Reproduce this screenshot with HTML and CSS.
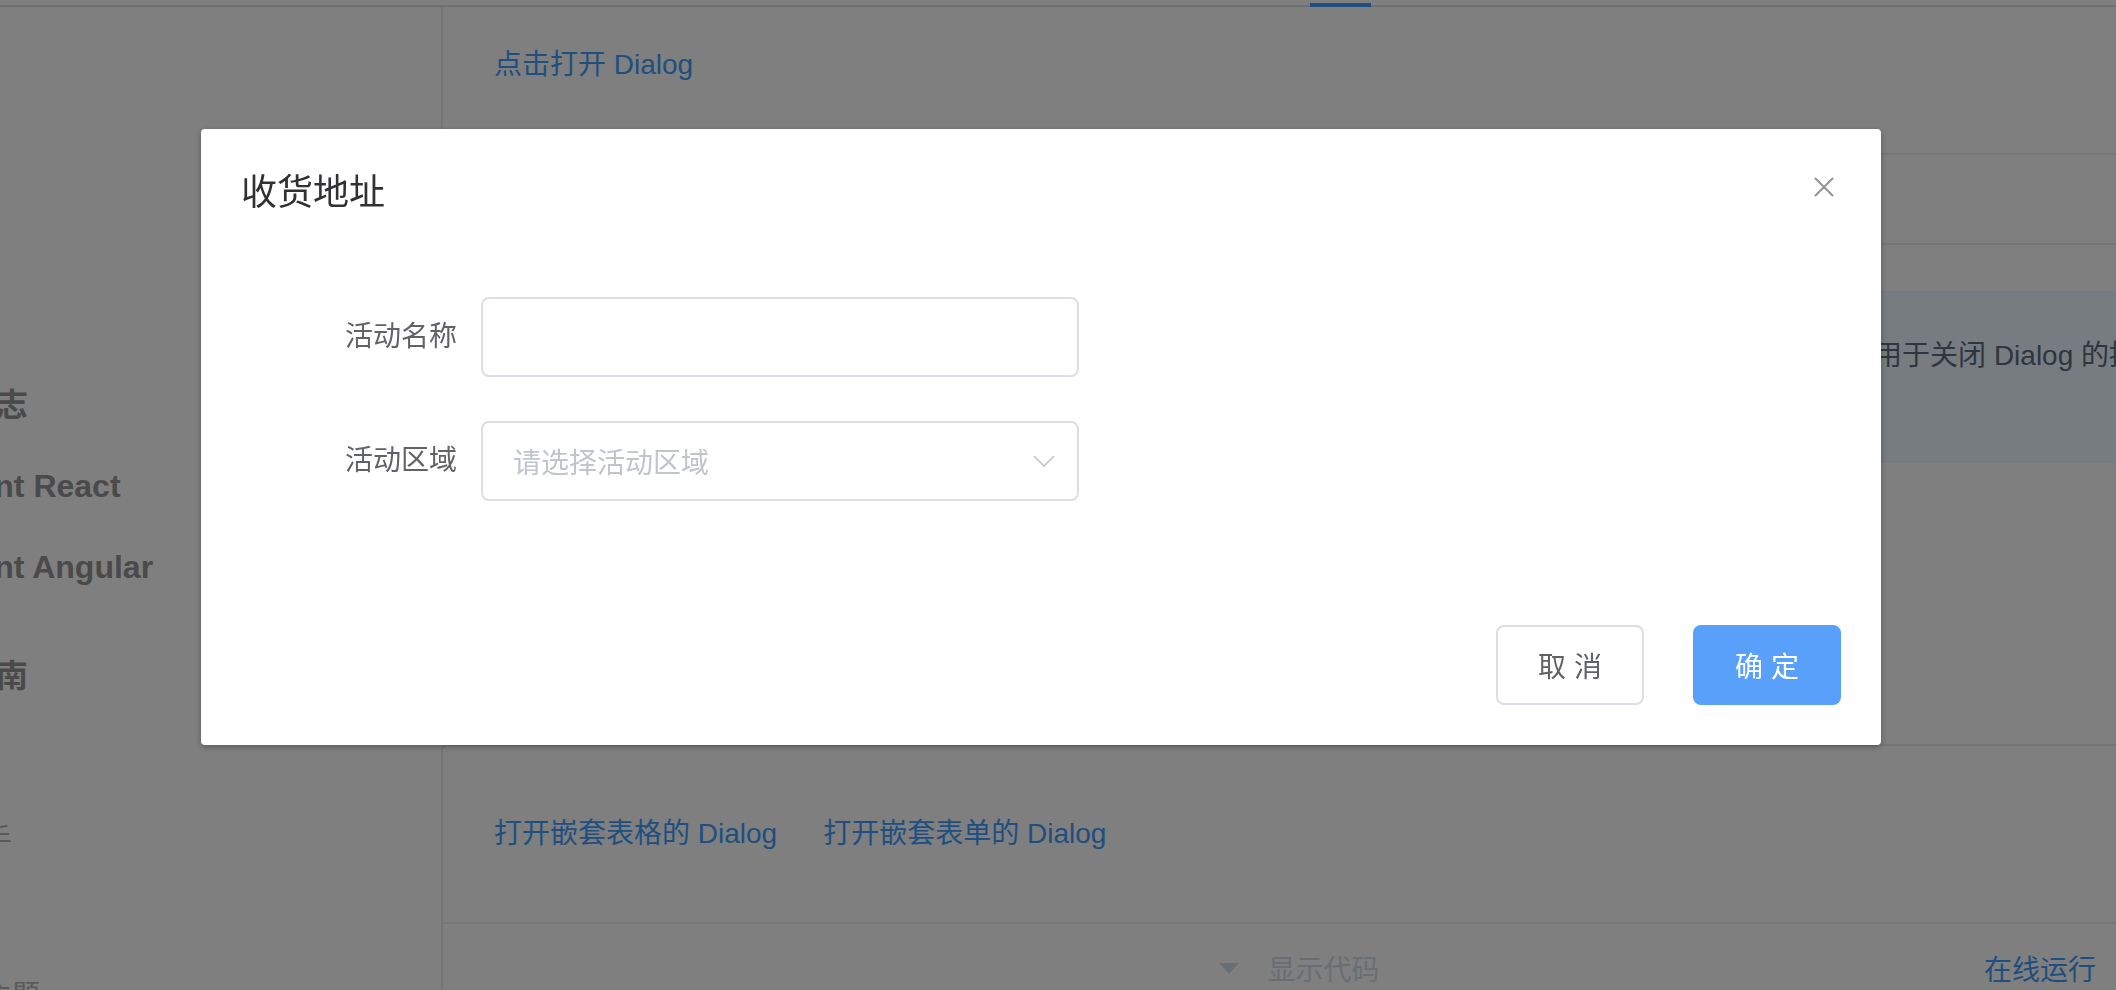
FILE: index.html
```html
<!DOCTYPE html>
<html lang="zh-CN">
<head>
<meta charset="utf-8">
<title>Dialog 对话框</title>
<link rel="stylesheet" href="styles.css">
</head>
<body>
<div class="page">
  <header class="header">
    <span class="nav-active"></span>
  </header>
  <div class="layout">
    <aside class="sidebar">
      <ul class="nav">
        <li class="nav-item">更新日志</li>
        <li class="nav-item">Element React</li>
        <li class="nav-item">Element Angular</li>
        <li class="nav-group">
          <div class="nav-item">开发指南</div>
          <ul class="sub-nav">
            <li>安装</li>
            <li>快速上手</li>
            <li>国际化</li>
            <li>自定义主题</li>
            <li>内置过渡动画</li>
          </ul>
        </li>
      </ul>
    </aside>
    <main class="content">
      <section class="demo demo-first">
        <div class="demo-source">
          <button class="text-btn">点击打开 Dialog</button>
        </div>
        <div class="demo-control">
          <span></span>
          <span class="toggle">
            <svg class="caret" viewBox="0 0 20 11" width="20" height="11"><polygon points="0,0 20,0 10,11" fill="#d3dce6"/></svg>
            显示代码
          </span>
          <span></span>
        </div>
      </section>

      <div class="tip">
        <p><code>before-close</code> 仅当用户通过点击 <code>icon</code> 或遮罩关闭 Dialog 时起效。如果你在 <code>footer</code> 具名 <code>slot</code> 里添加了用于关闭 Dialog 的按钮，<br>那么可以在按钮的点击回调函数里加入 <code>before-close</code> 的相关逻辑。</p>
      </div>

      <h3 class="section-title">自定义内容</h3>
      <p class="section-text">Dialog 组件的内容可以是任意的，甚至可以是表格或表单，下面是应用了 Element Table 和 Form 组件的两个样例。</p>

      <section class="demo demo-second">
        <div class="demo-source">
          <button class="text-btn">打开嵌套表格的 Dialog</button>
          <button class="text-btn">打开嵌套表单的 Dialog</button>
        </div>
        <div class="demo-control">
          <span></span>
          <span class="toggle">
            <svg class="caret" viewBox="0 0 20 11" width="20" height="11"><polygon points="0,0 20,0 10,11" fill="#d3dce6"/></svg>
            显示代码
          </span>
          <span class="run">在线运行</span>
        </div>
      </section>
    </main>
  </div>
</div>

<div class="mask"></div>

<div class="dialog-wrapper">
  <div class="dialog">
    <div class="dialog-header">
      <span class="dialog-title">收货地址</span>
      <button class="dialog-close" aria-label="Close">
        <svg viewBox="0 0 36 36" width="36" height="36"><path d="M8 9 L26 27 M26 9 L8 27" stroke="#909399" stroke-width="2" fill="none"/></svg>
      </button>
    </div>
    <div class="dialog-body">
      <form class="form">
        <div class="form-item">
          <label class="form-label">活动名称</label>
          <div class="input"></div>
        </div>
        <div class="form-item">
          <label class="form-label">活动区域</label>
          <div class="input select">
            <span class="placeholder">请选择活动区域</span>
            <svg class="arrow" viewBox="0 0 22 12" width="22" height="12"><polyline points="1,1 11,11 21,1" stroke="#c0c4cc" stroke-width="1.6" fill="none"/></svg>
          </div>
        </div>
      </form>
    </div>
    <div class="dialog-footer">
      <button class="btn">取 消</button>
      <button class="btn btn-primary">确 定</button>
    </div>
  </div>
</div>
</body>
</html>
```

FILE: styles.css
```css
* {
  box-sizing: border-box;
}

html, body {
  margin: 0;
  height: 100%;
}

body {
  overflow: hidden;
  background: #fff;
  font-family: "Helvetica Neue", Helvetica, "Liberation Sans", "Noto Sans CJK SC", sans-serif;
  color: #333;
}

.page {
  width: 2160px;
}

/* header remnant (page is scrolled) */
.header {
  position: relative;
  z-index: 2;
  height: 7px;
  background: #fff;
  border-bottom: 2px solid #dcdfe6;
}

.nav-active {
  position: absolute;
  left: 1310px;
  bottom: -2px;
  width: 61px;
  height: 4px;
  background: #409eff;
}

.layout {
  display: flex;
}

/* sidebar */
.sidebar {
  width: 441px;
  flex-shrink: 0;
  padding-top: 358px;
  overflow: hidden;
}

.nav,
.sub-nav {
  list-style: none;
  margin: 0;
  padding: 0;
}

.nav {
  margin-left: -100px;
}

.nav-item {
  height: 81px;
  line-height: 81px;
  font-size: 32px;
  font-weight: bold;
  color: #959595;
  white-space: nowrap;
}

.nav-group {
  margin-top: 28px;
}

.nav-group .nav-item {
  height: 80px;
  line-height: 80px;
}

.sub-nav {
  padding-top: 7px;
}

.sub-nav li {
  height: 78px;
  line-height: 78px;
  font-size: 28px;
  color: #b4b4b4;
  white-space: nowrap;
}

/* content */
.content {
  width: 1717px;
  flex-shrink: 0;
}

.demo {
  border: 2px solid #ebebeb;
  border-radius: 6px;
}

.demo-first {
  margin-top: -32px;
}

.demo-source {
  display: flex;
  gap: 46px;
  padding: 48px 48px 48px 51px;
}

.text-btn {
  border: 0;
  background: none;
  padding: 26px 0;
  margin: 0;
  font-family: inherit;
  font-size: 28px;
  line-height: 28px;
  color: #409eff;
  cursor: pointer;
}

.demo-control {
  display: grid;
  grid-template-columns: 1fr auto 1fr;
  align-items: center;
  height: 90px;
  border-top: 2px solid #eaeefb;
  font-size: 28px;
  color: #d3dce6;
}

.toggle {
  display: flex;
  align-items: center;
  gap: 28px;
}

.caret {
  display: block;
}

.run {
  justify-self: end;
  padding-right: 60px;
  color: #409eff;
}

.tip {
  margin-top: 46px;
  padding: 16px 32px;
  background: #ecf8ff;
  border-left: 10px solid #50bfff;
  border-radius: 8px;
}

.tip p {
  margin: 28px 0;
  font-size: 28px;
  line-height: 42px;
  color: #5e6d82;
  white-space: nowrap;
}

.tip code {
  font-family: "Liberation Mono", monospace;
  font-size: 26px;
  line-height: 1;
  padding: 0 8px;
  background: #f9fafc;
  border: 2px solid #eaeefb;
  border-radius: 8px;
}

.section-title {
  margin: 60px 0 0;
  font-size: 44px;
  line-height: 66px;
  font-weight: normal;
  color: #1f2d3d;
}

.section-text {
  margin: 28px 0 0;
  font-size: 28px;
  line-height: 42px;
  color: #5e6d82;
}

.demo-second {
  margin-top: 85px;
}

/* mask + dialog */
.mask {
  position: fixed;
  inset: 0;
  z-index: 10;
  background: rgba(0, 0, 0, 0.5);
}

.dialog-wrapper {
  position: fixed;
  inset: 0;
  z-index: 11;
  overflow: hidden;
}

.dialog {
  width: 1680px;
  margin: 129px 0 0 201px;
  background: #fff;
  border-radius: 4px;
  box-shadow: 0 2px 6px rgba(0, 0, 0, 0.3);
}

.dialog-header {
  position: relative;
  padding: 40px 40px 20px;
}

.dialog-title {
  display: block;
  font-size: 36px;
  line-height: 48px;
  color: #303133;
}

.dialog-close {
  position: absolute;
  top: 40px;
  right: 38px;
  width: 36px;
  height: 36px;
  padding: 0;
  border: 0;
  background: none;
}

.dialog-close svg {
  display: block;
}

.dialog-body {
  padding: 60px 40px;
}

.form-item {
  display: flex;
  align-items: center;
  margin-bottom: 44px;
}

.form-label {
  width: 240px;
  padding-right: 24px;
  text-align: right;
  font-size: 28px;
  line-height: 80px;
  color: #606266;
}

.input {
  width: 598px;
  height: 80px;
  border: 2px solid #dcdfe6;
  border-radius: 8px;
  background: #fff;
}

.select {
  display: flex;
  align-items: center;
  justify-content: space-between;
  padding: 0 22px 0 30px;
}

.placeholder {
  font-size: 28px;
  color: #c0c4cc;
}

.arrow {
  display: block;
}

.dialog-footer {
  display: flex;
  justify-content: flex-end;
  gap: 49px;
  padding: 20px 40px 40px;
}

.btn {
  width: 148px;
  height: 80px;
  padding: 0;
  border: 2px solid #dcdfe6;
  border-radius: 8px;
  background: #fff;
  font-family: inherit;
  font-size: 28px;
  color: #606266;
}

.btn-primary {
  background: #58a0fa;
  border-color: #58a0fa;
  color: #fff;
}
```
